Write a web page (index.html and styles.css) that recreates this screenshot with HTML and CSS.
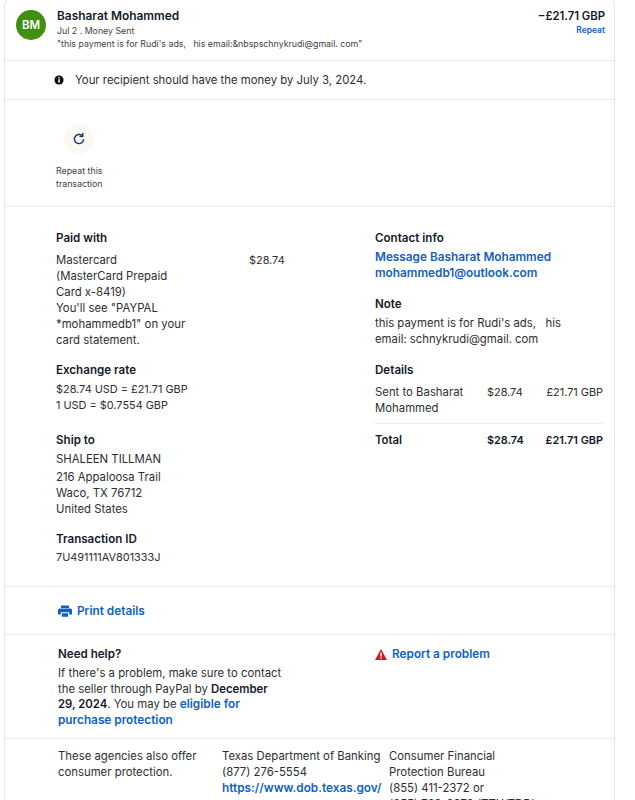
FILE: index.html
```html
<!DOCTYPE html>
<html>
   <head>
      <meta charset="utf-8">
      <title>Transaction details</title>
      <link rel="stylesheet" href="styles.css">
   </head>
   <body>
      <div class="card">

         <!-- Summary -->
         <div class="summary">
            <div class="avatar">BM</div>
            <div class="summaryText">
               <div class="name">Basharat Mohammed</div>
               <div class="small">Jul 2 . Money Sent</div>
               <div class="small">"this payment is for Rudi's ads,&nbsp;&nbsp; his email:&amp;nbspschnykrudi@gmail. com"</div>
            </div>
            <div class="summaryAmount">
               <div class="amount">−£21.71 GBP</div>
               <a class="repeatLink">Repeat</a>
            </div>
         </div>

         <!-- Notice -->
         <div class="notice">
            <svg class="noticeIcon" width="10" height="10" viewBox="0 0 10 10">
               <circle cx="5" cy="5" r="4.6" fill="#111" />
               <rect x="4.3" y="4.2" width="1.5" height="3.4" fill="#fff" />
               <rect x="4.3" y="2.2" width="1.5" height="1.3" fill="#fff" />
            </svg>
            <span>Your recipient should have the money by July 3, 2024.</span>
         </div>

         <!-- Repeat -->
         <div class="repeat">
            <div class="repeatCircle">
               <svg width="14" height="14" viewBox="0 0 14 14" fill="none">
                  <path d="M11.6 7.2 A4.6 4.6 0 1 1 10 3.5" stroke="#1c2f6b" stroke-width="1.4" />
                  <path d="M10.7 1 L10.7 4.3 L7.5 4.3" stroke="#1c2f6b" stroke-width="1.4" />
               </svg>
            </div>
            <div class="small repeatLabel">Repeat this<br>transaction</div>
         </div>

         <!-- Details -->
         <div class="details">
            <div class="leftCol">
               <div class="block paidBlock">
                  <h4>Paid with</h4>
                  <div class="paidRow">
                     <div class="paidText">Mastercard<br>(MasterCard Prepaid Card x-8419)<br>You'll see "PAYPAL *mohammedb1" on your card statement.</div>
                     <div class="figures">$28.74</div>
                  </div>
               </div>
               <div class="block rateBlock">
                  <h4>Exchange rate</h4>
                  <div class="figures">$28.74 USD = £21.71 GBP<br>1 USD = $0.7554 GBP</div>
               </div>
               <div class="block shipBlock">
                  <h4>Ship to</h4>
                  <div class="shipName">SHALEEN TILLMAN</div>
                  <div>216 Appaloosa Trail<br>Waco, TX 76712<br>United States</div>
               </div>
               <div class="block idBlock">
                  <h4>Transaction ID</h4>
                  <div class="figures">7U491111AV801333J</div>
               </div>
            </div>
            <div class="rightCol">
               <div class="block">
                  <h4>Contact info</h4>
                  <a class="link">Message Basharat Mohammed</a><br>
                  <a class="link">mohammedb1@outlook.com</a>
               </div>
               <div class="block">
                  <h4>Note</h4>
                  <div class="noteText">this payment is for Rudi's ads,&nbsp;&nbsp; his email: schnykrudi@gmail. com</div>
               </div>
               <div class="block lineBlock">
                  <h4>Details</h4>
                  <div class="lineRow lineFirst">
                     <div class="lineName">Sent to Basharat Mohammed</div>
                     <div class="lineUsd figures">$28.74</div>
                     <div class="lineGbp figures">£21.71 GBP</div>
                  </div>
                  <div class="lineRow lineTotal">
                     <div class="lineName">Total</div>
                     <div class="lineUsd figures">$28.74</div>
                     <div class="lineGbp figures">£21.71 GBP</div>
                  </div>
               </div>
            </div>
         </div>

         <!-- Print -->
         <div class="print">
            <svg width="14" height="12" viewBox="0 0 14 12">
               <path d="M3 0.5 H11 V3 H3 Z M1.5 3.5 H12.5 Q14 3.5 14 5 V9.5 H11.2 V7.2 H2.8 V9.5 H0 V5 Q0 3.5 1.5 3.5 Z M3.8 8.2 H10.2 V11.7 H3.8 Z" fill="#0f62c0" />
            </svg>
            <a class="link">Print details</a>
         </div>

         <!-- Help -->
         <div class="help">
            <div class="helpText">
               <h4>Need help?</h4>
               <div>If there's a problem, make sure to contact the seller through PayPal by <b>December 29, 2024</b>. You may be <a class="link">eligible for purchase protection</a></div>
            </div>
            <div class="report">
               <svg width="12" height="11" viewBox="0 0 12 11">
                  <path d="M6 0 L12 11 H0 Z" fill="#d01a1f" />
                  <rect x="5.3" y="3.6" width="1.4" height="3.9" fill="#fff" />
                  <rect x="5.3" y="8.2" width="1.4" height="1.4" fill="#fff" />
               </svg>
               <a class="link">Report a problem</a>
            </div>
         </div>

         <!-- Agencies -->
         <div class="agencies">
            <div class="agencyIntro">These agencies also offer consumer protection.</div>
            <div class="agencyBank">Texas Department of Banking<br>(877) 276-5554<br><a class="link">https://www.dob.texas.gov/</a></div>
            <div class="agencyBureau">Consumer Financial Protection Bureau<br>(855) 411-2372 or<br>(855) 729-2372 (TTY/TDD)</div>
         </div>

      </div>
   </body>
</html>
```

FILE: styles.css
```css
html, body {
   height : 800px;
   overflow : hidden;
}

body {
   margin : 0;
   background-color : #ffffff;
   font-family : "Inter", "Liberation Sans", sans-serif;
   font-size : 11.35px;
   line-height : 16px;
   color : #2c2e2f;
}

h4 {
   margin : 0 0 3px 0;
   font-size : 11.6px;
   line-height : 16px;
   font-weight : 600;
   color : #14192b;
}

b {
   font-weight : 600;
   color : #14192b;
}

.link {
   color : #0f62c0;
   font-size : 11.8px;
   font-weight : 600;
}

.figures {
   font-size : 10.9px;
   white-space : nowrap;
}

.card {
   width : 609px;
   margin-left : 4px;
   border-top : 1px solid #f0f1f2;
   border-left : 1px solid #e4e6e8;
   border-right : 1px solid #e4e6e8;
   border-radius : 6px 6px 0 0;
   margin-top : -1px;
}

.small {
   font-size : 8.8px;
   line-height : 13px;
   color : #3c3f41;
}

/* summary */
.summary {
   display : flex;
   height : 61px;
   box-sizing : border-box;
   padding : 8px 9px 0 11px;
   border-bottom : 1px solid #e9ebed;
}

.avatar {
   width : 30px;
   height : 30px;
   margin-top : 2px;
   border-radius : 50%;
   background-color : #3f8f10;
   color : #ffffff;
   font-size : 11.5px;
   font-weight : 600;
   line-height : 30px;
   text-align : center;
}

.summaryText {
   flex : 1;
   margin-left : 11px;
}

.name {
   font-size : 11.9px;
   font-weight : 600;
   color : #14192b;
}

.summaryAmount {
   text-align : right;
}

.amount {
   font-size : 11.3px;
   font-weight : 600;
   color : #14192b;
}

.repeatLink {
   display : block;
   font-size : 8.5px;
   line-height : 13px;
   font-weight : 600;
   color : #0f62c0;
}

/* notice */
.notice {
   display : flex;
   align-items : center;
   gap : 11px;
   height : 39px;
   box-sizing : border-box;
   padding-left : 49px;
   border-bottom : 1px solid #e9ebed;
}

/* repeat */
.repeat {
   height : 107px;
   box-sizing : border-box;
   padding : 24px 0 0 51px;
   border-bottom : 1px solid #e9ebed;
}

.repeatCircle {
   display : flex;
   align-items : center;
   justify-content : center;
   width : 30px;
   height : 30px;
   margin-left : 8px;
   margin-bottom : 10px;
   border-radius : 50%;
   background-color : #faf8f3;
}

/* details */
.details {
   display : flex;
   height : 380px;
   box-sizing : border-box;
   padding : 23px 11px 0 51px;
   border-bottom : 1px solid #e9ebed;
}

.leftCol {
   width : 319px;
}

.rightCol {
   flex : 1;
}

.block {
   margin-bottom : 15px;
}

.paidBlock {
   margin-bottom : 14px;
}

.paidBlock h4 {
   margin-bottom : 6px;
}

.rateBlock {
   margin-bottom : 19px;
}

.shipBlock {
   margin-bottom : 14px;
}

.shipName {
   margin-bottom : 2px;
}

.idBlock h4 {
   margin-bottom : 2px;
}

.paidRow {
   display : flex;
}

.paidText {
   width : 193px;
   padding-right : 55px;
   box-sizing : border-box;
}

.noteText {
   width : 200px;
}

.lineBlock h4 {
   margin-bottom : 6px;
}

.lineRow {
   display : flex;
}

.lineFirst {
   padding-bottom : 7px;
   border-bottom : 1px solid #e9ebed;
}

.lineTotal {
   padding-top : 8px;
   font-weight : 600;
   color : #14192b;
}

.lineName {
   width : 112px;
}

.lineUsd {
   width : 58px;
}

.lineGbp {
   flex : 1;
   text-align : right;
}

/* print */
.print {
   display : flex;
   align-items : center;
   gap : 5px;
   height : 48px;
   box-sizing : border-box;
   padding-left : 53px;
   border-bottom : 1px solid #e9ebed;
}

/* help */
.help {
   display : flex;
   height : 104px;
   box-sizing : border-box;
   padding : 11px 0 0 53px;
   border-bottom : 1px solid #e9ebed;
}

.helpText {
   width : 226px;
   margin-right : 4px;
   line-height : 15.5px;
}

.helpText h4 {
   margin-bottom : 4px;
}

.report {
   display : flex;
   align-items : flex-start;
   gap : 5px;
   margin-left : 87px;
}

.report svg {
   margin-top : 3px;
}

/* agencies */
.agencies {
   display : flex;
   padding : 9px 0 0 53px;
}

.agencyIntro {
   width : 164px;
   padding-right : 20px;
   box-sizing : border-box;
}

.agencyBank {
   width : 167px;
   white-space : nowrap;
}

.agencyBureau {
   width : 150px;
}
```
